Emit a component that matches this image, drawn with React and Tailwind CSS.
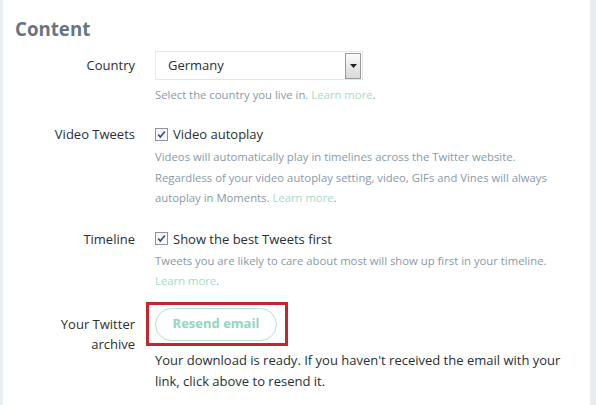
import React from "react";

const font = { fontFamily: '"Open Sans", "Noto Sans", sans-serif' };

function Check() {
  return (
    <span className="inline-flex h-[13px] w-[13px] items-center justify-center border border-[#8f8f9d] bg-[#f4f6f8] shrink-0">
      <svg width="9" height="9" viewBox="0 0 9 9">
        <path d="M1.2 4.6 L3.4 7 L7.8 1.6" fill="none" stroke="#3d4f76" strokeWidth="1.6" />
      </svg>
    </span>
  );
}

function Row({ label, labelClass = "", children, className = "" }) {
  return (
    <div className={`flex ${className}`}>
      <div className={`w-[120px] shrink-0 text-right text-[13px] text-[#292f33] ${labelClass}`}>{label}</div>
      <div className="ml-[20px] flex-1">{children}</div>
    </div>
  );
}

export default function App() {
  return (
    <div className="flex h-[405px] w-[596px] bg-white" style={font}>
      <div className="w-[3px] bg-[#e9eef2]" />
      <div className="flex-1 border-r border-[#eef1f3] pl-[12px] pt-[15px]">
        <h2 className="text-[18.7px] font-bold leading-[28px] text-[#66757f]">Content</h2>

        <Row label="Country" labelClass="leading-[29px]" className="mt-[8px]">
          <div className="flex h-[29px] w-[208px] items-center justify-between border border-[#e1e8ed] py-[1px] pl-[12px] pr-[1px]">
            <span className="text-[13px] text-[#292f33]">Germany</span>
            <span className="flex h-[26px] w-[16px] items-center justify-center border border-[#9a9a9a] bg-gradient-to-b from-[#fbfbfb] to-[#d8d8d8]">
              <svg width="7" height="4" viewBox="0 0 7 4"><path d="M0 0 H7 L3.5 4 Z" fill="#222" /></svg>
            </span>
          </div>
          <div className="mt-[5px] text-[11.3px] leading-[20px] text-[#8899a6]">
            Select the country you live in. <span className="text-[#a5dac6]">Learn more</span>.
          </div>
        </Row>

        <Row label="Video Tweets" labelClass="leading-[20px]" className="mt-[19px]">
          <div className="flex items-center gap-[5px] text-[13px] leading-[20px] text-[#292f33]">
            <Check />
            <span>Video autoplay</span>
          </div>
          <div className="mt-[3px] text-[11.3px] leading-[20.5px] text-[#8899a6]">
            Videos will automatically play in timelines across the Twitter website.<br />
            Regardless of your video autoplay setting, video, GIFs and Vines will always<br />
            autoplay in Moments. <span className="text-[#a5dac6]">Learn more</span>.
          </div>
        </Row>

        <Row label="Timeline" labelClass="leading-[20px]" className="mt-[20px]">
          <div className="flex items-center gap-[5px] text-[13px] leading-[20px] text-[#292f33]">
            <Check />
            <span>Show the best Tweets first</span>
          </div>
          <div className="mt-[2px] text-[11.3px] leading-[20.5px] text-[#8899a6]">
            Tweets you are likely to care about most will show up first in your timeline.<br />
            <span className="text-[#a5dac6]">Learn more</span>.
          </div>
        </Row>

        <Row label={<>Your Twitter<br />archive</>} labelClass="leading-[20px] mt-[12px]" className="mt-[10px]">
          <div className="-ml-[9px] w-[142px] border-[3px] border-[#c1272d] pb-[2px] pl-[6px] pt-[3px]">
            <button className="h-[33px] w-[122px] rounded-full border border-[#b7ddd0] text-[13px] font-bold text-[#92d6bd]">
              Resend email
            </button>
          </div>
          <div className="mt-[4px] text-[13px] leading-[21px] text-[#292f33]">
            Your download is ready. If you haven't received the email with your<br />
            link, click above to resend it.
          </div>
        </Row>
      </div>
      <div className="w-[5px] bg-[#e6ecf0]" />
    </div>
  );
}
